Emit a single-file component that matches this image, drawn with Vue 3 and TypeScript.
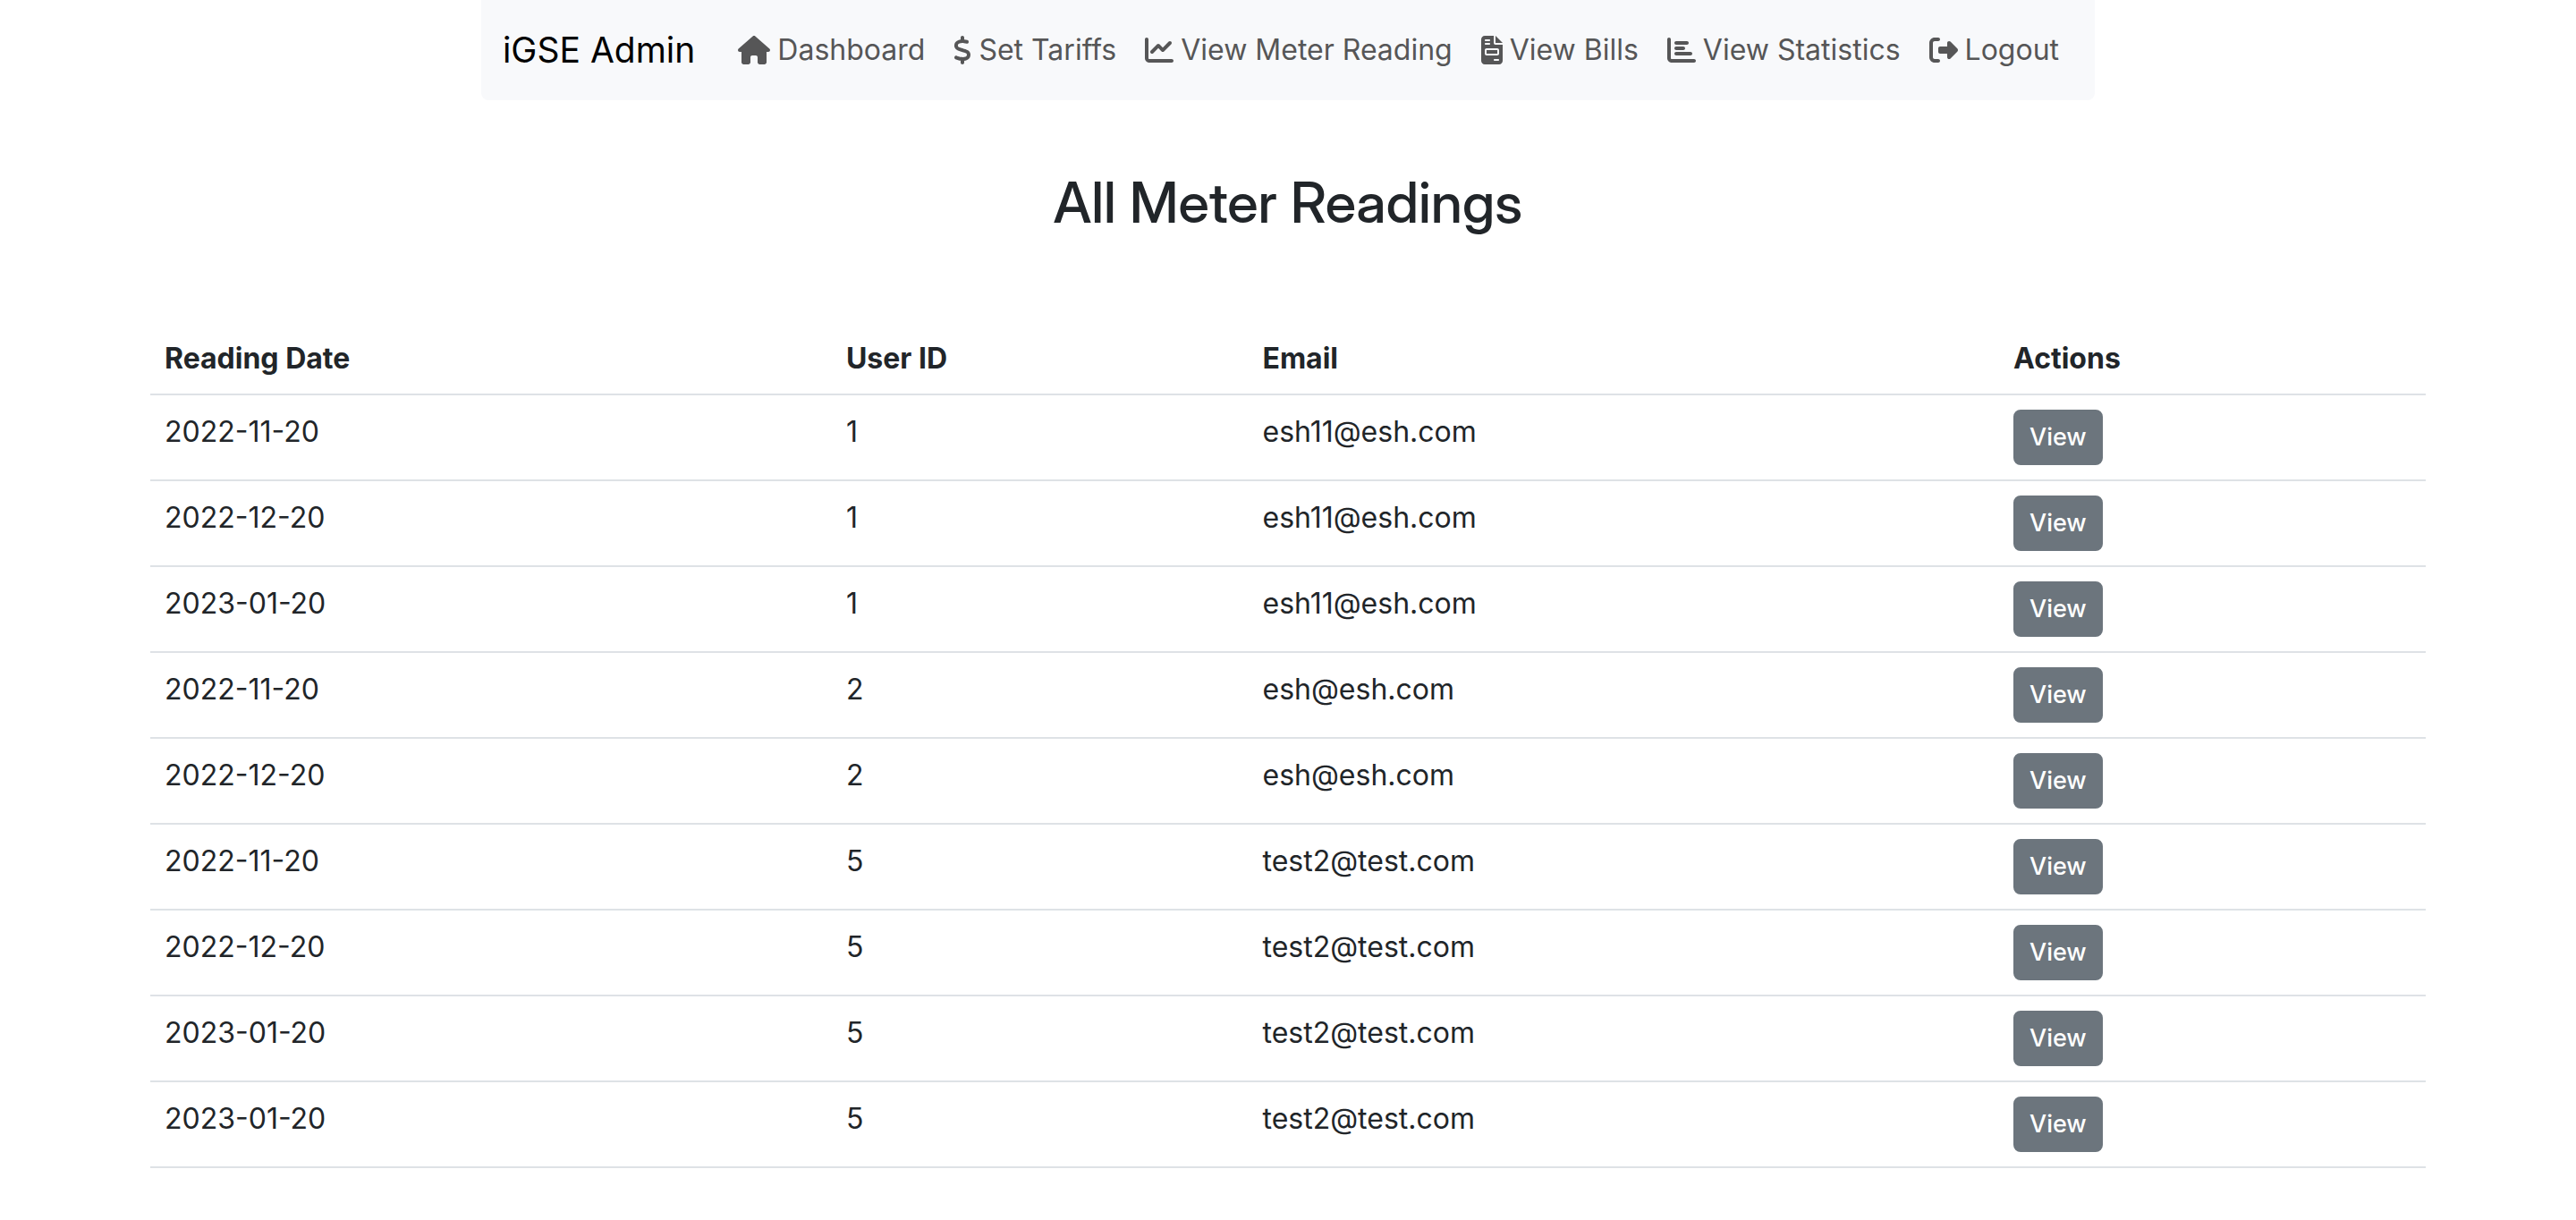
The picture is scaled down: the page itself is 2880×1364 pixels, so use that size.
<script setup lang="ts">
interface NavItem {
  label: string
  width: number
  path: string
}

interface Reading {
  date: string
  userId: number
  email: string
}

// width is the icon's viewBox width; every icon is 512 units tall
const navItems: NavItem[] = [
  {
    label: 'Dashboard',
    width: 576,
    path: 'M575.8 255.5c0 18-15 32.1-32 32.1h-32l.7 160.2c0 2.7-.2 5.4-.5 8.1V472c0 22.1-17.9 40-40 40H456c-1.1 0-2.2 0-3.3-.1c-1.4 .1-2.8 .1-4.2 .1H416 392c-22.1 0-40-17.9-40-40V448 384c0-17.7-14.3-32-32-32H256c-17.7 0-32 14.3-32 32v64 24c0 22.1-17.9 40-40 40H160 128.1c-1.5 0-3-.1-4.5-.2c-1.2 .1-2.4 .2-3.6 .2H104c-22.1 0-40-17.9-40-40V360c0-.9 0-1.9 .1-2.8V287.6H32c-18 0-32-14-32-32.1c0-9 3-17 10-24L266.4 8c7-7 15-8 22-8s15 2 21 7L564.8 231.5c8 7 12 15 11 24z',
  },
  {
    label: 'Set Tariffs',
    width: 320,
    path: 'M160 0c17.7 0 32 14.3 32 32V67.7c1.6 .2 3.1 .4 4.7 .7c.4 .1 .7 .1 1.1 .2l48 8.8c17.4 3.2 28.9 19.9 25.7 37.2s-19.9 28.9-37.2 25.7l-47.5-8.7c-31.3-4.6-58.9-1.5-78.3 6.2s-27.2 18.3-29 28.1c-2 10.7-.5 16.7 1.2 20.4c1.8 3.9 5.5 8.3 12.8 13.2c16.3 10.7 41.3 17.7 73.7 26.3l2.9 .8c28.6 7.6 63.6 16.8 89.6 33.8c14.2 9.3 27.6 21.9 35.9 39.5c8.5 17.9 10.3 37.9 6.4 59.2c-6.9 38-33.1 63.4-65.6 76.7c-13.7 5.6-28.6 9.2-44.4 11V480c0 17.7-14.3 32-32 32s-32-14.3-32-32V445.1c-.4-.1-.9-.1-1.3-.2l-.2 0 0 0c-24.4-3.8-64.5-14.3-91.5-26.3c-16.1-7.2-23.4-26.1-16.2-42.2s26.1-23.4 42.2-16.2c20.9 9.3 55.3 18.5 75.2 21.6c31.9 4.7 58.2 2 76-5.3c16.9-6.9 24.6-16.9 26.8-28.9c1.9-10.6 .4-16.7-1.3-20.4c-1.9-4-5.6-8.4-13-13.3c-16.4-10.7-41.5-17.7-74-26.3l-2.8-.7 0 0C119.4 279.3 84.4 270 58.4 253c-14.2-9.3-27.5-22-35.8-39.6c-8.4-17.9-10.1-37.9-6.1-59.2C23.7 116 52.3 91.2 84.8 78.3c13.3-5.3 27.9-8.9 43.2-11V32c0-17.7 14.3-32 32-32z',
  },
  {
    label: 'View Meter Reading',
    width: 512,
    path: 'M64 64c0-17.7-14.3-32-32-32S0 46.3 0 64V400c0 44.2 35.8 80 80 80H480c17.7 0 32-14.3 32-32s-14.3-32-32-32H80c-8.8 0-16-7.2-16-16V64zm406.6 86.6c12.5-12.5 12.5-32.8 0-45.3s-32.8-12.5-45.3 0L320 210.7l-57.4-57.4c-12.5-12.5-32.8-12.5-45.3 0l-112 112c-12.5 12.5-12.5 32.8 0 45.3s32.8 12.5 45.3 0L240 221.3l57.4 57.4c12.5 12.5 32.8 12.5 45.3 0l128-128z',
  },
  {
    label: 'View Bills',
    width: 384,
    path: 'M64 0C28.7 0 0 28.7 0 64V448c0 35.3 28.7 64 64 64H320c35.3 0 64-28.7 64-64V160H256c-17.7 0-32-14.3-32-32V0H64zM256 0V128H384L256 0zM80 64h64c8.8 0 16 7.2 16 16s-7.2 16-16 16H80c-8.8 0-16-7.2-16-16s7.2-16 16-16zm0 64h64c8.8 0 16 7.2 16 16s-7.2 16-16 16H80c-8.8 0-16-7.2-16-16s7.2-16 16-16zm16 96H288c17.7 0 32 14.3 32 32v64c0 17.7-14.3 32-32 32H96c-17.7 0-32-14.3-32-32V256c0-17.7 14.3-32 32-32zm0 32v64H288V256H96zM240 416h64c8.8 0 16 7.2 16 16s-7.2 16-16 16H240c-8.8 0-16-7.2-16-16s7.2-16 16-16z',
  },
  {
    label: 'View Statistics',
    width: 512,
    path: 'M32 32c17.7 0 32 14.3 32 32V400c0 8.8 7.2 16 16 16H480c17.7 0 32 14.3 32 32s-14.3 32-32 32H80c-44.2 0-80-35.8-80-80V64C0 46.3 14.3 32 32 32zm96 96c0-17.7 14.3-32 32-32l192 0c17.7 0 32 14.3 32 32s-14.3 32-32 32H160c-17.7 0-32-14.3-32-32zm32 64H288c17.7 0 32 14.3 32 32s-14.3 32-32 32H160c-17.7 0-32-14.3-32-32s14.3-32 32-32zm0 96H416c17.7 0 32 14.3 32 32s-14.3 32-32 32H160c-17.7 0-32-14.3-32-32s14.3-32 32-32z',
  },
  {
    label: 'Logout',
    width: 512,
    path: 'M377.9 105.9L500.7 228.7c7.2 7.2 11.3 17.1 11.3 27.3s-4.1 20.1-11.3 27.3L377.9 406.1c-6.4 6.4-15 9.9-24 9.9c-18.7 0-33.9-15.2-33.9-33.9l0-62.1-128 0c-17.7 0-32-14.3-32-32l0-64c0-17.7 14.3-32 32-32l128 0 0-62.1c0-18.7 15.2-33.9 33.9-33.9c9 0 17.6 3.6 24 9.9zM160 96L96 96c-17.7 0-32 14.3-32 32l0 256c0 17.7 14.3 32 32 32l64 0c17.7 0 32 14.3 32 32s-14.3 32-32 32l-64 0c-53 0-96-43-96-96L0 128C0 75 43 32 96 32l64 0c17.7 0 32 14.3 32 32s-14.3 32-32 32z',
  },
]

const readings: Reading[] = [
  { date: '2022-11-20', userId: 1, email: 'esh11@esh.com' },
  { date: '2022-12-20', userId: 1, email: 'esh11@esh.com' },
  { date: '2023-01-20', userId: 1, email: 'esh11@esh.com' },
  { date: '2022-11-20', userId: 2, email: 'esh@esh.com' },
  { date: '2022-12-20', userId: 2, email: 'esh@esh.com' },
  { date: '2022-11-20', userId: 5, email: 'test2@test.com' },
  { date: '2022-12-20', userId: 5, email: 'test2@test.com' },
  { date: '2023-01-20', userId: 5, email: 'test2@test.com' },
  { date: '2023-01-20', userId: 5, email: 'test2@test.com' },
]
</script>

<template>
  <div class="page">
    <header class="navbar">
      <a class="brand" href="#">iGSE Admin</a>
      <nav class="links">
        <a v-for="item in navItems" :key="item.label" class="link" href="#">
          <svg class="icon" :viewBox="`0 0 ${item.width} 512`" aria-hidden="true">
            <path :d="item.path" />
          </svg>
          <span>{{ item.label }}</span>
        </a>
      </nav>
    </header>

    <main class="content">
      <h1 class="title">All Meter Readings</h1>
      <table class="readings">
        <colgroup>
          <col class="col-date" />
          <col class="col-user" />
          <col class="col-email" />
          <col />
        </colgroup>
        <thead>
          <tr>
            <th scope="col">Reading Date</th>
            <th scope="col">User ID</th>
            <th scope="col">Email</th>
            <th scope="col">Actions</th>
          </tr>
        </thead>
        <tbody>
          <tr v-for="(reading, index) in readings" :key="index">
            <td>{{ reading.date }}</td>
            <td>{{ reading.userId }}</td>
            <td>{{ reading.email }}</td>
            <td><button type="button" class="view">View</button></td>
          </tr>
        </tbody>
      </table>
    </main>
  </div>
</template>

<style>
body {
  background: #fff;
}
</style>

<style scoped>
.page {
  display: flex;
  flex-direction: column;
  align-items: center;
  font-family: Inter, "Liberation Sans", sans-serif;
  font-size: 32px;
  line-height: 48px;
  color: #212529;
}

.navbar {
  display: flex;
  align-items: center;
  box-sizing: border-box;
  padding: 16px 24px;
  border-radius: 0 0 8px 8px;
  background: #f8f9fb;
  white-space: nowrap;
}

.brand {
  margin-right: 32px;
  font-size: 39px;
  line-height: 60px;
  color: #000;
  text-decoration: none;
}

.links {
  display: flex;
}

.link {
  display: flex;
  align-items: center;
  gap: 8px;
  padding: 16px;
  color: #565657;
  text-decoration: none;
}

.icon {
  flex: none;
  height: 32px;
  fill: currentColor;
}

.content {
  box-sizing: border-box;
  width: 100%;
  padding: 76px 168px 0;
}

.title {
  margin: 0 0 96px;
  font-family: "Inter Display", Inter, "Liberation Sans", sans-serif;
  font-size: 63px;
  font-weight: 550;
  line-height: 76px;
  text-align: center;
}

.readings {
  width: 100%;
  border-collapse: separate;
  border-spacing: 0;
  table-layout: fixed;
  line-height: 50px;
}

.col-date {
  width: 29.95%;
}

.col-user {
  width: 18.3%;
}

.col-email {
  width: 33%;
}

.readings th,
.readings td {
  padding: 16px 16px 14px;
  border-bottom: 2px solid #dee2e6;
  text-align: left;
  vertical-align: top;
}

.readings th {
  font-weight: 700;
}

.view {
  display: block;
  margin: 0 0 2px;
  padding: 8px 16px;
  border: 2px solid #6c757d;
  border-radius: 8px;
  background: #6c757d;
  color: #fff;
  font: inherit;
  font-size: 27px;
  font-weight: 500;
  line-height: 42px;
  cursor: pointer;
}
</style>
